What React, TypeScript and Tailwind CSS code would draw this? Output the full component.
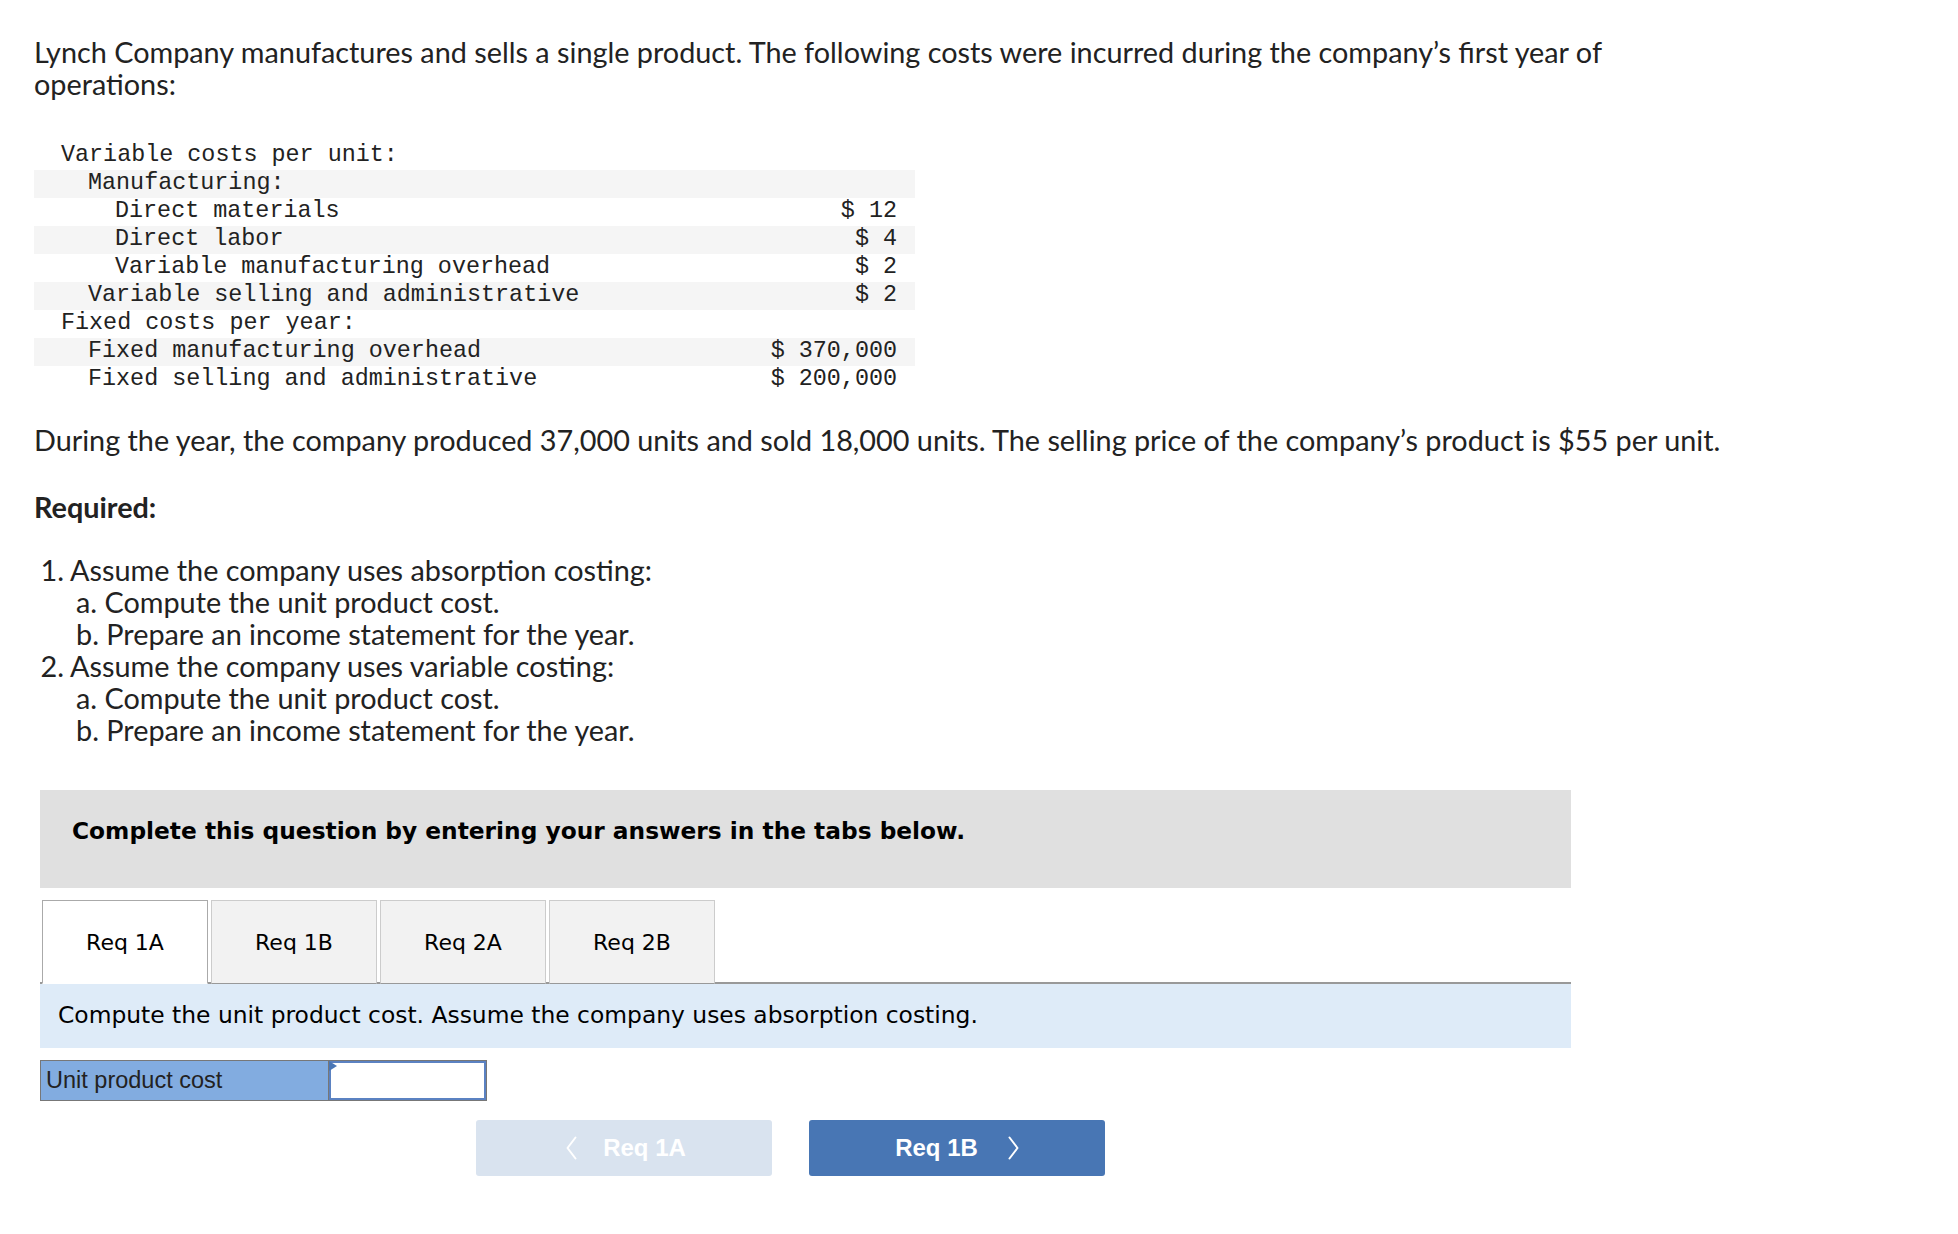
const sans = { fontFamily: '"Lato", "Open Sans", sans-serif' } as const;

interface CostRow {
  label: string;
  level: 0 | 1 | 2;
  value?: string;
}

const ROWS: CostRow[] = [
  { label: 'Variable costs per unit:', level: 0 },
  { label: 'Manufacturing:', level: 1 },
  { label: 'Direct materials', level: 2, value: '$ 12' },
  { label: 'Direct labor', level: 2, value: '$ 4' },
  { label: 'Variable manufacturing overhead', level: 2, value: '$ 2' },
  { label: 'Variable selling and administrative', level: 1, value: '$ 2' },
  { label: 'Fixed costs per year:', level: 0 },
  { label: 'Fixed manufacturing overhead', level: 1, value: '$ 370,000' },
  { label: 'Fixed selling and administrative', level: 1, value: '$ 200,000' },
];

const INDENT = ['pl-[27px]', 'pl-[54px]', 'pl-[81px]'];

const TABS = ['Req 1A', 'Req 1B', 'Req 2A', 'Req 2B'];

function Chevron({ dir }: { dir: 'left' | 'right' }) {
  return (
    <svg width="11" height="24" viewBox="0 0 11 24" fill="none" stroke="currentColor" strokeWidth="2" strokeLinecap="round" strokeLinejoin="round">
      {dir === 'left' ? <polyline points="9.5,1.5 1.5,12 9.5,22.5" /> : <polyline points="1.5,1.5 9.5,12 1.5,22.5" />}
    </svg>
  );
}

export default function App() {
  return (
    <div className="min-h-screen bg-white text-[#222] pl-[34px] pt-[36px] pb-10">
      {/* intro */}
      <p className="w-[1695px] text-[28.8px] leading-[32px]" style={sans}>
        Lynch Company manufactures and sells a single product. The following costs were incurred during the company’s first year of operations:
      </p>

      {/* cost table */}
      <div className="w-[881px] mt-[42px] font-['Liberation_Mono',monospace] text-[23.4px] text-[#222]">
        {ROWS.map((r, i) => (
          <div
            key={r.label}
            className={`h-[28px] flex items-center justify-between pr-[18px] ${i % 2 === 1 ? 'bg-[#f5f5f5]' : ''}`}
          >
            <span className={`whitespace-pre ${INDENT[r.level]}`}>{r.label}</span>
            {r.value && <span className="whitespace-pre">{r.value}</span>}
          </div>
        ))}
      </div>

      <p className="mt-[30px] text-[28.8px] leading-[32px] whitespace-nowrap" style={sans}>
        During the year, the company produced 37,000 units and sold 18,000 units. The selling price of the company’s product is $55 per unit.
      </p>

      <p className="mt-[35px] text-[28.8px] leading-[32px] font-bold" style={sans}>Required:</p>

      {/* requirements */}
      <div className="mt-[31px] text-[28.8px] leading-[32px]" style={sans}>
        {[
          { n: '1.', t: 'Assume the company uses absorption costing:' },
          { n: '2.', t: 'Assume the company uses variable costing:' },
        ].map(item => (
          <div key={item.n}>
            <div className="flex">
              <span className="w-[30px] text-right">{item.n}</span>
              <span className="ml-[6px]">{item.t}</span>
            </div>
            <div className="pl-[42px]">a. Compute the unit product cost.</div>
            <div className="pl-[42px]">b. Prepare an income statement for the year.</div>
          </div>
        ))}
      </div>

      {/* question panel */}
      <div className="w-[1531px] ml-[6px] mt-[44px]">
        <div className="h-[98px] bg-[#e0e0e0] pl-[32px] pt-[24px]">
          <p className="font-['DejaVu_Sans',sans-serif] font-bold text-[23.3px] text-black">
            Complete this question by entering your answers in the tabs below.
          </p>
        </div>

        <div className="mt-[12px] flex gap-[3px] pl-[2px] border-b-2 border-[#999]">
          {TABS.map((t, i) => (
            <div
              key={t}
              className={`w-[166px] h-[84px] -mb-[2px] flex items-center justify-center font-['DejaVu_Sans',sans-serif] text-[22px] text-black border ${
                i === 0 ? 'bg-white border-[#aaa] border-b-white' : 'bg-[#f2f2f2] border-[#ccc] border-b-[#999]'
              }`}
            >
              {t}
            </div>
          ))}
        </div>

        <div className="h-[64px] bg-[#deebf8] pl-[18px] flex items-center font-['DejaVu_Sans',sans-serif] text-[23.4px] text-black">
          Compute the unit product cost. Assume the company uses absorption costing.
        </div>

        <div className="mt-[12px] flex h-[41px] w-[447px] border border-[#777]">
          <div className="w-[288px] bg-[#82ace0] border-r border-[#777] flex items-center pl-[5px] font-['Liberation_Sans',sans-serif] text-[23.5px] text-[#222]">
            Unit product cost
          </div>
          <div className="relative flex-1 bg-white border-2 border-[#5b82c2]">
            <span className="absolute -left-[2px] -top-[2px] w-0 h-0 border-y-[5px] border-y-transparent border-l-[8px] border-l-[#4a76b5]" />
          </div>
        </div>

        <div className="mt-[19px] ml-[436px] flex gap-[37px]">
          <button className="w-[296px] h-[56px] rounded-[3px] bg-[#d9e3ef] text-white font-['Liberation_Sans',sans-serif] font-bold text-[24px] flex items-center justify-center gap-[26px] pl-[4px]">
            <Chevron dir="left" />
            <span>Req 1A</span>
          </button>
          <button className="w-[296px] h-[56px] rounded-[3px] bg-[#4876b4] text-white font-['Liberation_Sans',sans-serif] font-bold text-[24px] flex items-center justify-center gap-[30px]">
            <span>Req 1B</span>
            <Chevron dir="right" />
          </button>
        </div>
      </div>
    </div>
  );
}
